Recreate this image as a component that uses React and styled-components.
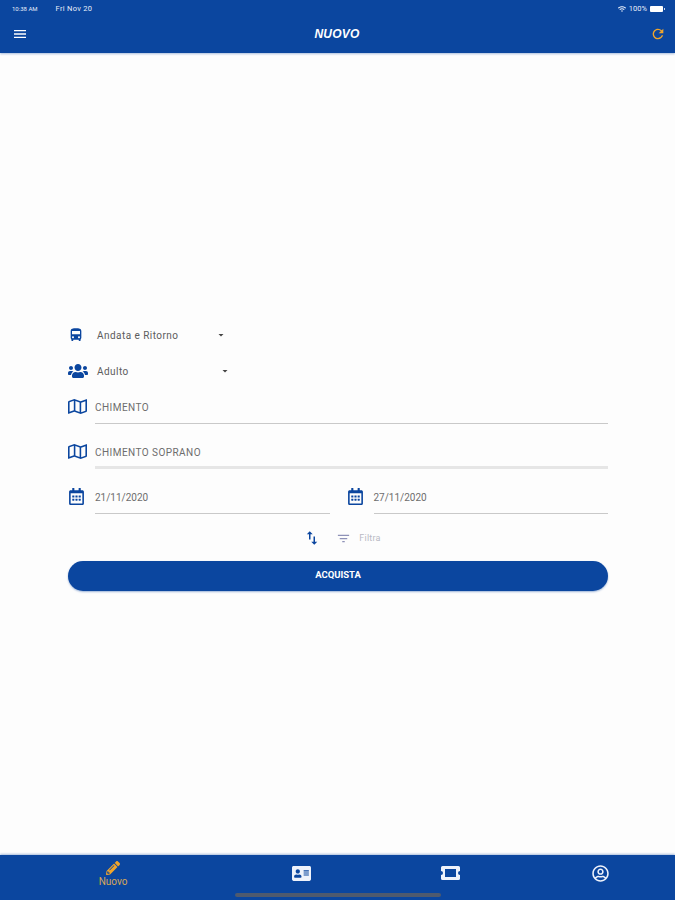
import React from "react";
import styled, { createGlobalStyle } from "styled-components";
import { FaWifi, FaUsers, FaRegMap, FaPencilAlt, FaAddressCard, FaRegUserCircle, FaRegCalendarAlt } from "react-icons/fa";
import { MdMenu, MdRefresh, MdDirectionsBus, MdSwapVert, MdFilterList, MdArrowDropDown } from "react-icons/md";

const BLUE = "#0b469f";
const ORANGE = "#f0a52c";

const GlobalStyle = createGlobalStyle`
  html, body { margin: 0; padding: 0; background: #fdfdfd; }
  * { box-sizing: border-box; }
  body { font-family: Roboto, "Liberation Sans", sans-serif; }
`;

const Page = styled.div`
  width: 675px;
  height: 900px;
  display: flex;
  flex-direction: column;
  overflow: hidden;
`;

const Header = styled.header`
  height: 53px;
  background: ${BLUE};
  color: #fff;
  display: flex;
  flex-direction: column;
  box-shadow: 0 1px 2px rgba(11, 70, 159, 0.35);
`;

const StatusBar = styled.div`
  height: 16px;
  padding: 1px 9px 0 12px;
  display: flex;
  align-items: center;
  justify-content: space-between;
  color: #e8eefa;
`;

const StatusGroup = styled.div`
  display: flex;
  align-items: center;
  gap: ${(p) => p.$gap}px;
`;

const StatusText = styled.span`
  font-size: ${(p) => p.$size}px;
  letter-spacing: ${(p) => p.$spacing || 0}px;
`;

const Battery = styled.span`
  position: relative;
  width: 13px;
  height: 6px;
  background: #fff;
  border-radius: 1px;
  &::after {
    content: "";
    position: absolute;
    left: 14px;
    top: 2px;
    width: 1px;
    height: 2px;
    background: #c9d6ee;
  }
`;

const TitleBar = styled.div`
  flex: 1;
  padding: 0 9px 2px 13px;
  display: flex;
  align-items: center;
  justify-content: space-between;
`;

const Title = styled.h1`
  margin: 1px 4px 0 0;
  font-family: "Liberation Sans", sans-serif;
  font-size: 12px;
  font-style: italic;
  font-weight: 700;
  letter-spacing: 0.2px;
  text-transform: uppercase;
`;

const Main = styled.main`
  flex: 1;
  padding: 264px 67px 0 68px;
  display: flex;
  flex-direction: column;
`;

const SelectRow = styled.div`
  height: 36px;
  display: flex;
  align-items: center;
  color: ${BLUE};
`;

const SelectIcon = styled.div`
  width: 29px;
  display: flex;
  flex: none;
`;

const Select = styled.div`
  width: ${(p) => p.$width}px;
  display: flex;
  align-items: center;
  justify-content: space-between;
  font-size: 10px;
  letter-spacing: 0.45px;
  color: #5c5c5c;
`;

const FieldRow = styled.div`
  display: flex;
  gap: 17px;
  margin-bottom: 10px;
`;

const Field = styled.div`
  flex: 1;
  height: 35px;
  display: flex;
  align-items: center;
  color: ${BLUE};
`;

const IconSlot = styled.div`
  width: 27px;
  display: flex;
  flex: none;
`;

const FieldValue = styled.div`
  flex: 1;
  height: 35px;
  display: flex;
  align-items: center;
  padding-top: ${(p) => (p.$thick ? 4 : 2)}px;
  font-size: 10px;
  letter-spacing: ${(p) => p.$spacing || 0}px;
  color: #6d6d6d;
  border-bottom: ${(p) => (p.$thick ? "3px solid #e6e6e6" : "1.5px solid #c9c9c9")};
`;

const FilterRow = styled.div`
  height: 32px;
  margin-top: -2px;
  display: flex;
  align-items: center;
  justify-content: center;
  color: ${BLUE};
`;

const FilterButton = styled.div`
  display: flex;
  align-items: center;
  gap: 8px;
  margin-left: 15px;
  margin-right: -8px;
  font-size: 9px;
  letter-spacing: 0.2px;
  color: #b9b9c4;
`;

const BuyButton = styled.button`
  height: 30px;
  margin-top: 7px;
  padding: 0 0 3px;
  border: 0;
  border-radius: 15px;
  background: ${BLUE};
  color: #fff;
  font-family: inherit;
  font-size: 9.5px;
  font-weight: 700;
  box-shadow: 0 1px 2px rgba(11, 70, 159, 0.4);
`;

const TabBar = styled.nav`
  position: relative;
  height: 45px;
  padding: 6px 0 0;
  background: ${BLUE};
  display: grid;
  grid-template-columns: 226px 150px 149px 150px;
  align-items: start;
  box-shadow: 0 -1px 2px rgba(11, 70, 159, 0.35);
`;

const Tab = styled.div`
  display: flex;
  flex-direction: column;
  align-items: center;
  gap: 2px;
  min-height: 24px;
  justify-content: ${(p) => (p.$active ? "flex-start" : "center")};
  color: ${(p) => (p.$active ? ORANGE : "#eef2fb")};
  svg {
    flex: none;
  }
`;

const TabLabel = styled.span`
  font-size: 10px;
  line-height: 10px;
  color: #d8a75a;
`;

const HomeIndicator = styled.div`
  position: absolute;
  left: 235px;
  bottom: 3px;
  width: 206px;
  height: 4px;
  border-radius: 2px;
  background: #4f5a6e;
`;

const TicketIcon = () => (
  <svg width="19" height="14" viewBox="0 0 19 14" fill="currentColor">
    <path d="M1.5 0h16A1.5 1.5 0 0 1 19 1.5V5a2 2 0 0 0 0 4v3.500A1.500 1.500 0 0 1 17.500 14h-16A1.500 1.500 0 0 1 0 12.500V9a2 2 0 0 0 0-4V1.500A1.500 1.500 0 0 1 1.500 0Zm2.500 3v8h11v-8Z" fillRule="evenodd" />
  </svg>
);

export default function App() {
  return (
    <Page>
      <GlobalStyle />
      <Header>
        <StatusBar>
          <StatusGroup $gap={18}>
            <StatusText $size={6}>10:38 AM</StatusText>
            <StatusText $size={7.5} $spacing={0.3}>Fri Nov 20</StatusText>
          </StatusGroup>
          <StatusGroup $gap={3}>
            <FaWifi size={8} />
            <StatusText $size={7.5}>100%</StatusText>
            <Battery />
            <span />
          </StatusGroup>
        </StatusBar>
        <TitleBar>
          <MdMenu size={16} style={{ marginLeft: -1 }} />
          <Title>Nuovo</Title>
          <MdRefresh size={16} color={ORANGE} />
        </TitleBar>
      </Header>
      <Main>
        <SelectRow>
          <SelectIcon><MdDirectionsBus size={16} /></SelectIcon>
          <Select $width={130}>
            Andata e Ritorno
            <MdArrowDropDown size={12} color="#444" />
          </Select>
        </SelectRow>
        <SelectRow>
          <SelectIcon><FaUsers size={20} /></SelectIcon>
          <Select $width={134}>
            Adulto
            <MdArrowDropDown size={12} color="#444" />
          </Select>
        </SelectRow>
        <FieldRow>
          <Field>
            <IconSlot><FaRegMap size={19} /></IconSlot>
            <FieldValue $spacing={0.45}>CHIMENTO</FieldValue>
          </Field>
        </FieldRow>
        <FieldRow>
          <Field>
            <IconSlot><FaRegMap size={19} /></IconSlot>
            <FieldValue $thick $spacing={0.45}>CHIMENTO SOPRANO</FieldValue>
          </Field>
        </FieldRow>
        <FieldRow>
          <Field>
            <IconSlot><FaRegCalendarAlt size={17} /></IconSlot>
            <FieldValue>21/11/2020</FieldValue>
          </Field>
          <Field>
            <IconSlot><FaRegCalendarAlt size={17} /></IconSlot>
            <FieldValue>27/11/2020</FieldValue>
          </Field>
        </FieldRow>
        <FilterRow>
          <MdSwapVert size={18} />
          <FilterButton>
            <MdFilterList size={15} color="#8f92b8" />
            Filtra
          </FilterButton>
        </FilterRow>
        <BuyButton>ACQUISTA</BuyButton>
      </Main>
      <TabBar>
        <Tab $active>
          <FaPencilAlt size={14} />
          <TabLabel>Nuovo</TabLabel>
        </Tab>
        <Tab><FaAddressCard size={19} /></Tab>
        <Tab><TicketIcon /></Tab>
        <Tab><FaRegUserCircle size={17} /></Tab>
        <HomeIndicator />
      </TabBar>
    </Page>
  );
}
